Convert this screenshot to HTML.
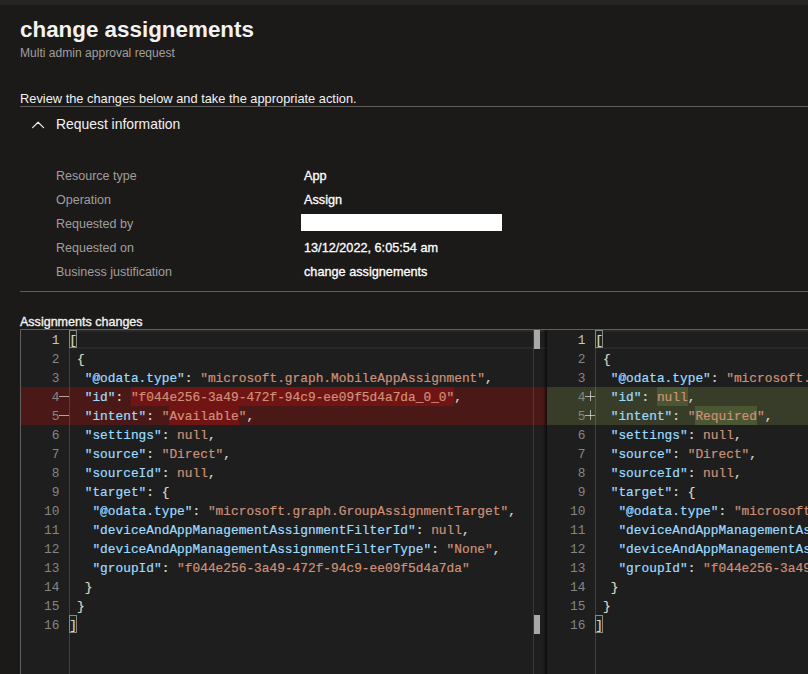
<!DOCTYPE html>
<html><head><meta charset="utf-8">
<style>
html,body{margin:0;padding:0}
body{width:808px;height:674px;overflow:hidden;background:#1b1a19;position:relative;font-family:"Liberation Sans",sans-serif;color:#f3f2f1}
.a{position:absolute;white-space:pre;line-height:1}
#topbar{position:absolute;left:0;top:0;width:808px;height:5px;background:#262523}
#title{left:20px;top:18.5px;font-size:22.4px;font-weight:bold;color:#f3f2f1}
#sub{left:20px;top:47px;font-size:12.07px;color:#a19f9d}
#review{left:20px;top:93px;font-size:12.84px;color:#f3f2f1}
#line1{position:absolute;left:20px;top:106px;width:788px;height:1px;background:#605e5c}
#reqinfo{left:56px;top:118px;font-size:13.9px;color:#f3f2f1}
.lbl{left:56px;font-size:12.5px;color:#a19f9d}
.val{left:304px;font-size:12.7px;color:#ffffff;-webkit-text-stroke:0.3px #ffffff}
#redact{position:absolute;left:301px;top:214px;width:201px;height:17px;background:#fff}
#line2{position:absolute;left:20px;top:291px;width:788px;height:1px;background:#605e5c}
#assign{left:20px;top:316px;font-size:12.54px;color:#f3f2f1;-webkit-text-stroke:0.35px #f3f2f1}
#frame{position:absolute;left:20px;top:329px;width:788px;height:345px;border-left:1px solid #605f5e;border-top:1px solid #605f5e;box-sizing:border-box;background:#1e1e1e}
.ed{position:absolute;top:330px;height:344px;overflow:hidden}
#edL{left:21px;width:526px}
#edR{left:547px;width:261px}
.row{position:absolute;left:0;width:100%;height:19px}
.del{background:#4b1818}
.ins{background:#373d29}
.curhl{position:absolute;left:48px;right:0;top:0;height:19px;box-sizing:border-box;border-top:2px solid #282828;border-bottom:2px solid #282828}
.gline{position:absolute;left:48px;top:0;width:1px;height:344px;background:rgba(255,255,255,0.15)}
.ln{position:absolute;left:0;width:38.5px;text-align:right;font-family:"Liberation Mono",monospace;font-size:12.83px;line-height:19px;color:#858585;padding-top:1px}
.dh{position:absolute;left:38px;width:10px;height:1px;background:rgba(255,255,255,0.6)}.dv{position:absolute;left:43px;width:1px;height:10px;background:rgba(255,255,255,0.6)}
.code{position:absolute;left:48.3px;top:0;font-family:"Liberation Mono",monospace;font-size:12.83px;line-height:19px;white-space:normal;color:#d4d4d4;-webkit-text-stroke:0.2px currentColor}
.code div{height:19px;padding-top:1px;box-sizing:border-box;white-space:pre}
.k{color:#9cdcfe}.s{color:#ce9178}.p{color:#dcd8c8}.b{color:#dcd6c0}
.hd{}.hbox{position:absolute;height:19px}.hbd{background:#701414}.hbi{background:#4b5632}
.hi{}
.bm{position:absolute;top:1px;width:8px;height:18px;box-sizing:border-box;border:1px solid #888;background:#1b251b}
#ruler{position:absolute;left:533px;top:330px;width:1px;height:344px;background:rgba(255,255,255,0.12)}
.thumb{position:absolute;left:534px;width:6px;height:19px;background:#a8a8a8}
#shadow{position:absolute;left:543px;top:330px;width:4px;height:344px;background:linear-gradient(to right,rgba(0,0,0,0),rgba(0,0,0,0.65))}
</style></head><body>
<div id="topbar"></div>
<div class="a" id="title">change assignements</div>
<div class="a" id="sub">Multi admin approval request</div>
<div class="a" id="review">Review the changes below and take the appropriate action.</div>
<div id="line1"></div>
<svg style="position:absolute;left:31px;top:120px" width="15" height="10" viewBox="0 0 15 10"><path d="M1.6 7.6 L7.1 2.2 L12.6 7.6" fill="none" stroke="#ecebea" stroke-width="1.2" stroke-linecap="round" stroke-linejoin="round"/></svg>
<div class="a" id="reqinfo">Request information</div>
<div class="a lbl" style="top:170px">Resource type</div>
<div class="a lbl" style="top:194px">Operation</div>
<div class="a lbl" style="top:218px">Requested by</div>
<div class="a lbl" style="top:242px">Requested on</div>
<div class="a lbl" style="top:266px">Business justification</div>
<div class="a val" style="top:170px">App</div>
<div class="a val" style="top:194px">Assign</div>
<div id="redact"></div>
<div class="a val" style="top:242px">13/12/2022, 6:05:54 am</div>
<div class="a val" style="top:266px">change assignements</div>
<div id="line2"></div>
<div class="a" id="assign">Assignments changes</div>
<div id="frame"></div>

<div class="ed" id="edL">
  <div class="row del" style="top:57px"></div>
  <div class="row del" style="top:76px"></div>
  <div class="hbox hbd" style="top:57px;left:109.88px;width:323.3px"></div>
  <div class="hbox hbd" style="top:76px;left:148.37px;width:69.28px"></div>
  <div class="curhl"></div>
  <div class="gline"></div>
  <div class="bm" style="left:48px;top:0px"></div>
  <div class="bm" style="left:48px;top:285px"></div>
  <div class="ln"><div style="color:#c6c6c6">1</div><div>2</div><div>3</div><div>4</div><div>5</div><div>6</div><div>7</div><div>8</div><div>9</div><div>10</div><div>11</div><div>12</div><div>13</div><div>14</div><div>15</div><div>16</div></div>
  <div class="dh" style="top:66px"></div>
  <div class="dh" style="top:85px"></div>
  <div class="code">
<div><span class="b">[</span></div>
<div> <span class="b">{</span></div>
<div>  <span class="k">"@odata.type"</span><span class="p">: </span><span class="s">"microsoft.graph.MobileAppAssignment"</span><span class="p">,</span></div>
<div>  <span class="k">"id"</span><span class="p">: </span><span class="s hd">"f044e256-3a49-472f-94c9-ee09f5d4a7da_0_0"</span><span class="p">,</span></div>
<div>  <span class="k">"intent"</span><span class="p">: </span><span class="s">"<span class="hd">Available</span>"</span><span class="p">,</span></div>
<div>  <span class="k">"settings"</span><span class="p">: </span><span class="s">null</span><span class="p">,</span></div>
<div>  <span class="k">"source"</span><span class="p">: </span><span class="s">"Direct"</span><span class="p">,</span></div>
<div>  <span class="k">"sourceId"</span><span class="p">: </span><span class="s">null</span><span class="p">,</span></div>
<div>  <span class="k">"target"</span><span class="p">: </span><span class="b">{</span></div>
<div>   <span class="k">"@odata.type"</span><span class="p">: </span><span class="s">"microsoft.graph.GroupAssignmentTarget"</span><span class="p">,</span></div>
<div>   <span class="k">"deviceAndAppManagementAssignmentFilterId"</span><span class="p">: </span><span class="s">null</span><span class="p">,</span></div>
<div>   <span class="k">"deviceAndAppManagementAssignmentFilterType"</span><span class="p">: </span><span class="s">"None"</span><span class="p">,</span></div>
<div>   <span class="k">"groupId"</span><span class="p">: </span><span class="s">"f044e256-3a49-472f-94c9-ee09f5d4a7da"</span></div>
<div>  <span class="b">}</span></div>
<div> <span class="b">}</span></div>
<div><span class="b">]</span></div>
  </div>
</div>

<div class="ed" id="edR">
  <div class="row ins" style="top:57px"></div>
  <div class="row ins" style="top:76px"></div>
  <div class="hbox hbi" style="top:57px;left:109.88px;width:30.79px"></div>
  <div class="hbox hbi" style="top:76px;left:148.37px;width:61.58px"></div>
  <div class="curhl"></div>
  <div class="gline"></div>
  <div class="bm" style="left:48px;top:0px"></div>
  <div class="bm" style="left:48px;top:285px"></div>
  <div class="ln"><div style="color:#c6c6c6">1</div><div>2</div><div>3</div><div>4</div><div>5</div><div>6</div><div>7</div><div>8</div><div>9</div><div>10</div><div>11</div><div>12</div><div>13</div><div>14</div><div>15</div><div>16</div></div>
  <div class="dh" style="top:66px"></div><div class="dv" style="top:61px"></div>
  <div class="dh" style="top:85px"></div><div class="dv" style="top:80px"></div>
  <div class="code">
<div><span class="b">[</span></div>
<div> <span class="b">{</span></div>
<div>  <span class="k">"@odata.type"</span><span class="p">: </span><span class="s">"microsoft.graph.MobileAppAssignment"</span><span class="p">,</span></div>
<div>  <span class="k">"id"</span><span class="p">: </span><span class="s hi">null</span><span class="p">,</span></div>
<div>  <span class="k">"intent"</span><span class="p">: </span><span class="s">"<span class="hi">Required</span>"</span><span class="p">,</span></div>
<div>  <span class="k">"settings"</span><span class="p">: </span><span class="s">null</span><span class="p">,</span></div>
<div>  <span class="k">"source"</span><span class="p">: </span><span class="s">"Direct"</span><span class="p">,</span></div>
<div>  <span class="k">"sourceId"</span><span class="p">: </span><span class="s">null</span><span class="p">,</span></div>
<div>  <span class="k">"target"</span><span class="p">: </span><span class="b">{</span></div>
<div>   <span class="k">"@odata.type"</span><span class="p">: </span><span class="s">"microsoft.graph.GroupAssignmentTarget"</span><span class="p">,</span></div>
<div>   <span class="k">"deviceAndAppManagementAssignmentFilterId"</span><span class="p">: </span><span class="s">null</span><span class="p">,</span></div>
<div>   <span class="k">"deviceAndAppManagementAssignmentFilterType"</span><span class="p">: </span><span class="s">"None"</span><span class="p">,</span></div>
<div>   <span class="k">"groupId"</span><span class="p">: </span><span class="s">"f044e256-3a49-472f-94c9-ee09f5d4a7da"</span></div>
<div>  <span class="b">}</span></div>
<div> <span class="b">}</span></div>
<div><span class="b">]</span></div>
  </div>
</div>

<div id="ruler"></div>
<div class="thumb" style="top:330px"></div>
<div class="thumb" style="top:615px"></div>
<div id="shadow"></div>
</body></html>
